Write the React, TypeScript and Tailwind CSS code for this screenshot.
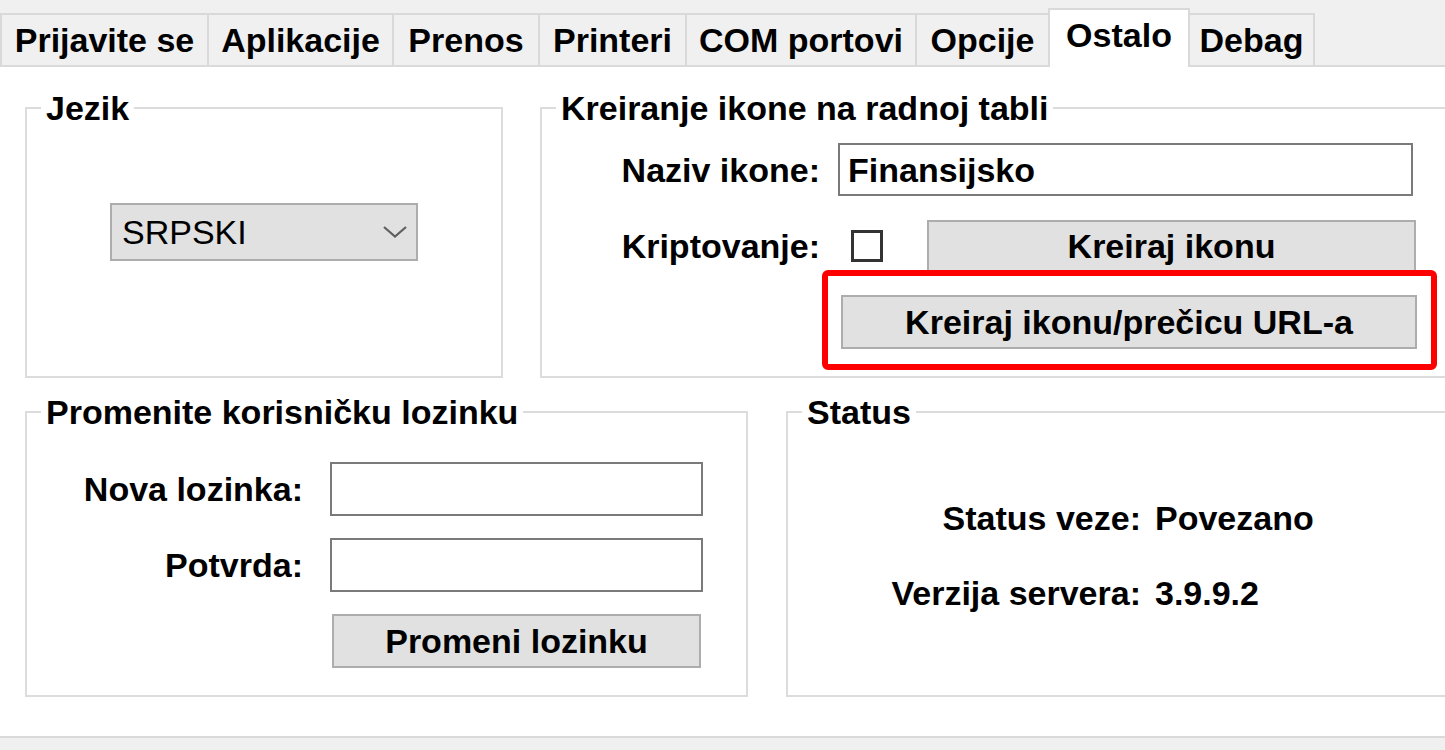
const tabs = [
  { label: "Prijavite se", width: "w-[207px]" },
  { label: "Aplikacije", width: "w-[185px]" },
  { label: "Prenos", width: "w-[146px]" },
  { label: "Printeri", width: "w-[147px]" },
  { label: "COM portovi", width: "w-[230px]" },
  { label: "Opcije", width: "w-[133px]" },
  { label: "Ostalo", width: "w-[142px]" },
  { label: "Debag", width: "w-[125px]" },
];

const activeTab = 6;

function Button({ children, className }: { children: React.ReactNode; className: string }) {
  return (
    <button
      className={`${className} flex items-center justify-center bg-[#e1e1e1] border-2 border-[#adadad] text-[34px] leading-[34px] font-bold text-black`}
    >
      {children}
    </button>
  );
}

function TextBox({ value, className }: { value?: string; className: string }) {
  return (
    <div
      className={`${className} flex items-center bg-white border-2 border-[#7a7a7a] pl-[8px] text-[34px] leading-[34px] font-bold text-black`}
    >
      {value}
    </div>
  );
}

function Legend({ children }: { children: React.ReactNode }) {
  return (
    <legend className="ml-[14px] px-[5px] text-[34px] leading-[34px] font-bold text-black">
      {children}
    </legend>
  );
}

export default function App() {
  return (
    <div className="relative w-[1445px] h-[750px] overflow-hidden bg-[#f0f0f0] font-['Liberation_Sans',Arial,sans-serif] text-black">
      {/* tab strip */}
      <div className="h-[65px] flex items-end">
        {tabs.map((t, i) => {
          const active = i === activeTab;
          const edge = i === activeTab + 1 ? "border-l-0" : "border-l-2";
          const last = i === tabs.length - 1 || active ? "border-r-2" : "";
          return (
            <div
              key={t.label}
              className={
                active
                  ? `${t.width} relative z-10 -mb-[2px] h-[59px] bg-white border-l-2 border-r-2 border-t-2 border-[#d9d9d9] flex justify-center pt-[8px] text-[34px] leading-[34px] font-bold`
                  : `${t.width} h-[52px] bg-[#f0f0f0] ${edge} ${last} border-t-2 border-[#d9d9d9] flex justify-center pt-[8px] text-[34px] leading-[34px] font-bold`
              }
            >
              {t.label}
            </div>
          );
        })}
      </div>

      {/* page */}
      <div className="h-[673px] overflow-hidden bg-white border-y-2 border-[#dadada] pt-[24px] pl-[25px]">
        <div className="flex">
          <fieldset className="w-[478px] shrink-0 h-[287px] border-2 border-[#dcdcdc]">
            <Legend>Jezik</Legend>
            <div className="mt-[78px] mx-auto w-[308px] h-[58px] flex items-center justify-between bg-[#e1e1e1] border-2 border-[#adadad] pl-[10px] pr-[9px] text-[34px] leading-[34px]">
              <span>SRPSKI</span>
              <svg width="24" height="12" viewBox="0 0 24 12">
                <polyline points="1,1 12,10.5 23,1" fill="none" stroke="#5f5f5f" strokeWidth="2.2" />
              </svg>
            </div>
          </fieldset>

          <fieldset className="ml-[37px] w-[912px] shrink-0 h-[287px] border-2 border-[#dcdcdc]">
            <Legend>Kreiranje ikone na radnoj tabli</Legend>
            <div className="mt-[18px] flex items-center">
              <span className="w-[278px] text-right text-[34px] leading-[34px] font-bold">Naziv ikone:</span>
              <TextBox value="Finansijsko" className="ml-[18px] w-[575px] h-[53px]" />
            </div>
            <div className="mt-[24px] flex items-center h-[52px]">
              <span className="w-[278px] text-right text-[34px] leading-[34px] font-bold">Kriptovanje:</span>
              <div className="ml-[31px] w-[32px] h-[32px] border-[3px] border-[#333333] bg-white" />
              <Button className="ml-[44px] w-[489px] h-[52px]">Kreiraj ikonu</Button>
            </div>
            <div className="mt-[23px] flex">
              <Button className="ml-[299px] w-[576px] h-[54px]">Kreiraj ikonu/prečicu URL-a</Button>
            </div>
          </fieldset>
        </div>

        <div className="mt-[17px] flex">
          <fieldset className="w-[723px] shrink-0 h-[302px] border-2 border-[#dcdcdc]">
            <Legend>Promenite korisničku lozinku</Legend>
            <div className="mt-[33px] flex items-center">
              <span className="w-[276px] text-right text-[34px] leading-[34px] font-bold">Nova lozinka:</span>
              <TextBox className="ml-[27px] w-[373px] h-[54px]" />
            </div>
            <div className="mt-[22px] flex items-center">
              <span className="w-[276px] text-right text-[34px] leading-[34px] font-bold">Potvrda:</span>
              <TextBox className="ml-[27px] w-[373px] h-[54px]" />
            </div>
            <div className="mt-[22px] flex">
              <Button className="ml-[305px] w-[369px] h-[54px]">Promeni lozinku</Button>
            </div>
          </fieldset>

          <fieldset className="ml-[38px] w-[666px] shrink-0 h-[302px] border-2 border-[#dcdcdc]">
            <Legend>Status</Legend>
            <div className="mt-[72px] grid grid-cols-[353px_auto] gap-x-[14px] gap-y-[41px] text-[34px] leading-[34px] font-bold">
              <span className="text-right">Status veze:</span>
              <span>Povezano</span>
              <span className="text-right">Verzija servera:</span>
              <span>3.9.9.2</span>
            </div>
          </fieldset>
        </div>
      </div>

      {/* annotation */}
      <div className="absolute left-[822px] top-[270px] w-[615px] h-[100px] border-[6px] border-[#ff0000] rounded-[6px] pointer-events-none z-20" />
    </div>
  );
}
